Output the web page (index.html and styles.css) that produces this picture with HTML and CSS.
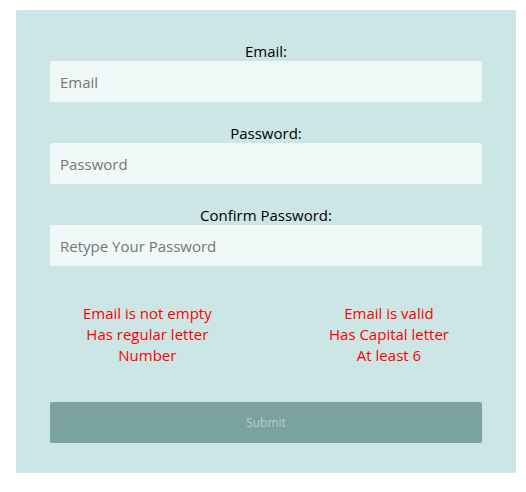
FILE: index.html
```html
<!DOCTYPE html>
<html lang="en">
<head>
<meta charset="utf-8">
<meta name="viewport" content="width=device-width, initial-scale=1">
<title>Sign up</title>
<link rel="stylesheet" href="styles.css">
</head>
<body>
<form class="form">
  <div class="field">
    <label for="email">Email:</label>
    <input id="email" type="email" placeholder="Email">
  </div>
  <div class="field">
    <label for="password">Password:</label>
    <input id="password" type="password" placeholder="Password">
  </div>
  <div class="field">
    <label for="confirm">Confirm Password:</label>
    <input id="confirm" type="password" placeholder="Retype Your Password">
  </div>
  <div class="checks">
    <div class="checks-column">
      <div>Email is not empty</div>
      <div>Has regular letter</div>
      <div>Number</div>
    </div>
    <div class="checks-column">
      <div>Email is valid</div>
      <div>Has Capital letter</div>
      <div>At least 6</div>
    </div>
  </div>
  <button class="submit" type="submit" disabled>Submit</button>
</form>
</body>
</html>
```
FILE: styles.css
```css
* {
  box-sizing: border-box;
}

body {
  margin: 0;
  padding: 10px 10px 19px 16px;
  background: #fff;
  color: #000;
  font-family: "Segoe UI", "Open Sans", sans-serif;
  font-size: 15px;
  line-height: 21px;
}

.form {
  padding: 31px 34px 30px;
  border-radius: 2px;
  background: #cce6e5;
  text-align: center;
}

.field {
  margin-bottom: 21px;
}

.field label {
  display: block;
  line-height: 20px;
}

.field input {
  display: block;
  width: 100%;
  height: 41px;
  padding: 0 10px;
  border: 0;
  border-radius: 2px;
  background: #f0f9f8;
  font: inherit;
}

.field input::placeholder {
  color: #757575;
  opacity: 1;
}

.checks {
  display: flex;
  justify-content: space-between;
  margin: 37px 0 36px;
  padding: 0 33px;
  color: #f00;
}

.submit {
  display: block;
  width: 100%;
  height: 41px;
  border: 0;
  border-radius: 2px;
  background: #79a2a1;
  color: #b2d0cf;
  font-family: inherit;
  font-size: 12px;
}
```
